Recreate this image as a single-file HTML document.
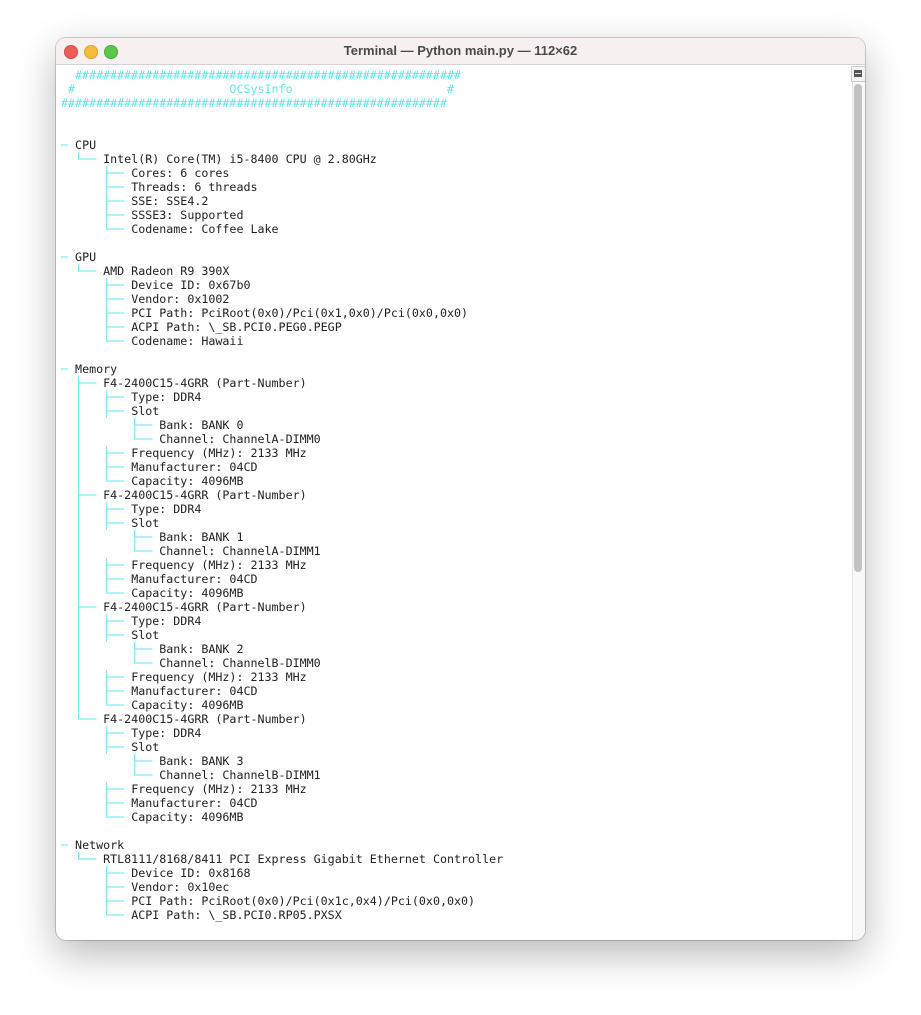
<!DOCTYPE html>
<html><head><meta charset="utf-8"><style>
html,body{margin:0;padding:0;background:#fff;width:921px;height:1015px;overflow:hidden}
.win{position:absolute;left:56px;top:38px;width:809px;height:902px;border-radius:10px;background:#fff;box-shadow:0 14px 40px rgba(0,0,0,.28),0 0 0 1px rgba(0,0,0,.18);overflow:hidden}
.tb{position:absolute;left:0;top:0;width:100%;height:26px;background:#f6f0f1;border-bottom:1px solid #d8d2d3;text-align:center;font:bold 13px/26px "Liberation Sans",sans-serif;color:#4a4a4a}
.dot{position:absolute;top:7px;width:12px;height:12px;border-radius:50%}
pre{position:absolute;left:5px;top:30px;margin:0;font:11.67px/14px "DejaVu Sans Mono",monospace;color:#222}
pre span{line-height:14px}
.c{color:#5fe6ee}
.sbtn{position:absolute;left:795px;top:28px;width:13px;height:14px;border:1px solid #ccc;background:#f4f4f4}
.sbtn i{position:absolute;left:2px;top:3px;width:8px;height:7px;background:#555;border:0}
.sbtn b{position:absolute;left:3px;top:6px;width:6px;height:1px;background:#ddd}
.sb{position:absolute;left:796px;top:44px;width:13px;height:858px;background:#f8f8f8;border-left:1px solid #e4e4e4}
.th{position:absolute;left:798px;top:46px;width:8px;height:488px;border-radius:4px;background:#c2c2c2}
</style></head><body>
<div class="win">
<div class="tb">Terminal — Python main.py — 112×62
<span class="dot" style="left:8px;background:#ed5e57;border:0.5px solid #d24b44"></span>
<span class="dot" style="left:28px;background:#f5bd3c;border:0.5px solid #d9a12e"></span>
<span class="dot" style="left:48px;background:#5ec648;border:0.5px solid #4aa83a"></span>
</div>
<div class="sb"></div><div class="th"></div>
<div class="sbtn"><i></i><b></b></div>
<pre><span class="c">  #######################################################
 #                      OCSysInfo                      #
#######################################################</span>


<span class="c">─</span> CPU
<span class="c">  └── </span>Intel(R) Core(TM) i5-8400 CPU @ 2.80GHz
<span class="c">      ├── </span>Cores: 6 cores
<span class="c">      ├── </span>Threads: 6 threads
<span class="c">      ├── </span>SSE: SSE4.2
<span class="c">      ├── </span>SSSE3: Supported
<span class="c">      └── </span>Codename: Coffee Lake

<span class="c">─</span> GPU
<span class="c">  └── </span>AMD Radeon R9 390X
<span class="c">      ├── </span>Device ID: 0x67b0
<span class="c">      ├── </span>Vendor: 0x1002
<span class="c">      ├── </span>PCI Path: PciRoot(0x0)/Pci(0x1,0x0)/Pci(0x0,0x0)
<span class="c">      ├── </span>ACPI Path: \_SB.PCI0.PEG0.PEGP
<span class="c">      └── </span>Codename: Hawaii

<span class="c">─</span> Memory
<span class="c">  ├── </span>F4-2400C15-4GRR (Part-Number)
<span class="c">  │   ├── </span>Type: DDR4
<span class="c">  │   ├── </span>Slot
<span class="c">  │       ├── </span>Bank: BANK 0
<span class="c">  │       └── </span>Channel: ChannelA-DIMM0
<span class="c">  │   ├── </span>Frequency (MHz): 2133 MHz
<span class="c">  │   ├── </span>Manufacturer: 04CD
<span class="c">  │   └── </span>Capacity: 4096MB
<span class="c">  ├── </span>F4-2400C15-4GRR (Part-Number)
<span class="c">  │   ├── </span>Type: DDR4
<span class="c">  │   ├── </span>Slot
<span class="c">  │       ├── </span>Bank: BANK 1
<span class="c">  │       └── </span>Channel: ChannelA-DIMM1
<span class="c">  │   ├── </span>Frequency (MHz): 2133 MHz
<span class="c">  │   ├── </span>Manufacturer: 04CD
<span class="c">  │   └── </span>Capacity: 4096MB
<span class="c">  ├── </span>F4-2400C15-4GRR (Part-Number)
<span class="c">  │   ├── </span>Type: DDR4
<span class="c">  │   ├── </span>Slot
<span class="c">  │       ├── </span>Bank: BANK 2
<span class="c">  │       └── </span>Channel: ChannelB-DIMM0
<span class="c">  │   ├── </span>Frequency (MHz): 2133 MHz
<span class="c">  │   ├── </span>Manufacturer: 04CD
<span class="c">  │   └── </span>Capacity: 4096MB
<span class="c">  └── </span>F4-2400C15-4GRR (Part-Number)
<span class="c">      ├── </span>Type: DDR4
<span class="c">      ├── </span>Slot
<span class="c">          ├── </span>Bank: BANK 3
<span class="c">          └── </span>Channel: ChannelB-DIMM1
<span class="c">      ├── </span>Frequency (MHz): 2133 MHz
<span class="c">      ├── </span>Manufacturer: 04CD
<span class="c">      └── </span>Capacity: 4096MB

<span class="c">─</span> Network
<span class="c">  └── </span>RTL8111/8168/8411 PCI Express Gigabit Ethernet Controller
<span class="c">      ├── </span>Device ID: 0x8168
<span class="c">      ├── </span>Vendor: 0x10ec
<span class="c">      ├── </span>PCI Path: PciRoot(0x0)/Pci(0x1c,0x4)/Pci(0x0,0x0)
<span class="c">      └── </span>ACPI Path: \_SB.PCI0.RP05.PXSX</pre>
</div>
</body></html>
